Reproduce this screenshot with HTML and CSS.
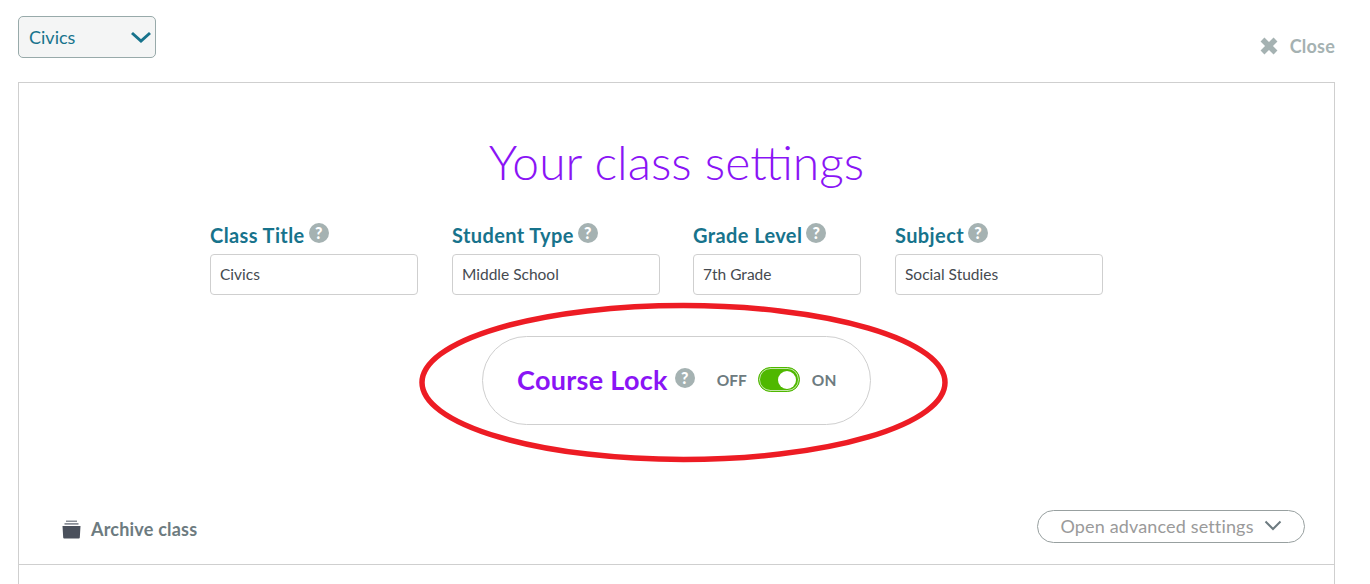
FILE: index.html
```html
<!DOCTYPE html>
<html lang="en">
<head>
    <meta charset="UTF-8">
    <title>Class settings</title>
    <link rel="stylesheet" href="styles.css">
</head>
<body>

    <div class="topbar">
        <div class="class-select">
            <span>Civics</span>
            <svg width="22" height="12" viewBox="0 0 22 12"><path d="M2 2l9 8 9-8" fill="none" stroke="#17738c" stroke-width="3"/></svg>
        </div>
        <a href="#" class="close">
            <svg width="18" height="18" viewBox="0 0 18 18"><path d="M2.500 2.500l13 13M15.500 2.500l-13 13" fill="none" stroke="#a5b2b2" stroke-width="5.500"/></svg>
            Close
        </a>
    </div>

    <div class="panel">
        <h1 class="title">Your class settings</h1>

        <div class="fields">
            <div class="field">
                <label>Class Title <span class="help">?</span></label>
                <div class="input">Civics</div>
            </div>
            <div class="field">
                <label>Student Type <span class="help">?</span></label>
                <div class="input">Middle School</div>
            </div>
            <div class="field field-small">
                <label>Grade Level <span class="help">?</span></label>
                <div class="input">7th Grade</div>
            </div>
            <div class="field">
                <label>Subject <span class="help">?</span></label>
                <div class="input">Social Studies</div>
            </div>
        </div>

        <div class="lock">
            <span class="lock-name">Course Lock</span>
            <span class="help">?</span>
            <span class="lock-off">OFF</span>
            <span class="toggle"><span class="knob"></span></span>
            <span class="lock-on">ON</span>
        </div>

        <div class="panel-bottom">
            <a href="#" class="archive">
                <svg width="19" height="19" viewBox="0 0 19 19">
                    <path d="M4 0.500h11v1.500H4zM2.500 3h14v1.800h-14z" fill="#8a8f98"/>
                    <path d="M0.500 6h18l-0.700 11.500a1 1 0 0 1-1 1H2.200a1 1 0 0 1-1-1z" fill="#4a505c"/>
                </svg>
                Archive class
            </a>
            <a href="#" class="advanced">
                Open advanced settings
                <svg width="18" height="11" viewBox="0 0 18 11"><path d="M1.500 1.500L9 9l7.500-7.500" fill="none" stroke="#6d7b80" stroke-width="2"/></svg>
            </a>
        </div>
        <div class="panel-rest"></div>
    </div>

    <!-- red marker circled on the screenshot -->
    <svg class="marker" width="536" height="166" viewBox="0 0 536 166">
        <ellipse cx="264.500" cy="80.500" rx="261.500" ry="77" fill="none" stroke="#ed1c24" stroke-width="5.500"/>
    </svg>

</body>
</html>
```

FILE: styles.css
```css
* {
    margin: 0;
    padding: 0;
    box-sizing: border-box;
    font-family: Lato, "Open Sans", sans-serif;
}

body {
    background-color: white;
    padding: 16px 35px 0 18px;
    height: 584px;
    overflow: hidden;
}

.topbar {
    display: flex;
    justify-content: space-between;
    height: 66px;
}

.class-select {
    width: 138px;
    height: 42px;
    display: flex;
    justify-content: space-between;
    align-items: center;
    padding: 0 3px 1px 10px;
    background-color: #f4f5f5;
    border: 1px solid #98aaaa;
    border-radius: 5px;
    color: #17738c;
    font-size: 18px;
}

.close {
    display: flex;
    align-items: center;
    gap: 12px;
    height: 28px;
    margin-top: 16px;
    color: #a5b2b2;
    font-size: 18px;
    font-weight: bold;
    letter-spacing: 0.2px;
    text-decoration: none;
}

.panel {
    height: 520px;
    border: 1px solid #cfcfcf;
    border-bottom: none;
}

.title {
    margin-top: 49px;
    height: 60px;
    line-height: 60px;
    text-align: center;
    font-size: 48px;
    font-weight: 300;
    color: #8a14f5;
}

.fields {
    display: flex;
    gap: 34px;
    margin-top: 28px;
    padding-left: 191px;
}

.field {
    width: 208px;
}

.field-small {
    width: 168px;
    margin-left: -1px;
}

.field label {
    display: flex;
    align-items: center;
    gap: 4px;
    height: 30px;
    margin-bottom: 4px;
    color: #17738c;
    font-size: 20px;
    font-weight: bold;
    letter-spacing: 0.4px;
}

.input {
    height: 41px;
    line-height: 39px;
    padding-left: 9px;
    border: 1px solid #cfcfcf;
    border-radius: 4px;
    color: #454a50;
    font-size: 15.500px;
}

.help {
    display: inline-block;
    width: 20px;
    height: 20px;
    line-height: 20px;
    margin-top: -5px;
    border-radius: 50%;
    background-color: #a5b2b2;
    color: white;
    font-size: 16px;
    font-weight: 900;
    letter-spacing: 0;
    text-align: center;
}

.lock {
    display: flex;
    align-items: center;
    width: 389px;
    height: 89px;
    margin: 41px auto 0;
    padding: 0 0 2px 34px;
    border: 1px solid #cfcfcf;
    border-radius: 45px;
}

.lock .help {
    margin: -3px 0 0 7px;
}

.lock-name {
    color: #8a14f5;
    font-size: 27px;
    font-weight: bold;
    letter-spacing: 0.3px;
}

.lock-off, .lock-on {
    color: #6d7b80;
    font-size: 15.500px;
    font-weight: bold;
}

.lock-off {
    margin-left: 22px;
}

.lock-on {
    margin-left: 12px;
}

.toggle {
    display: flex;
    justify-content: flex-end;
    align-items: center;
    width: 42px;
    height: 25px;
    margin-left: 11px;
    padding-right: 3px;
    background-color: #4fb800;
    border: 1px solid #4fb800;
    border-radius: 13px;
    box-shadow: inset 0 0 0 1px #c4e6a8;
}

.knob {
    width: 18px;
    height: 18px;
    border-radius: 50%;
    background-color: white;
}

.panel-bottom {
    display: flex;
    justify-content: space-between;
    align-items: center;
    height: 33px;
    margin-top: 85px;
    padding: 0 29px 0 43px;
}

.archive {
    display: flex;
    align-items: center;
    gap: 10px;
    margin-top: 5px;
    color: #6d7b80;
    font-size: 18px;
    font-weight: bold;
    letter-spacing: 0.2px;
    text-decoration: none;
}

.advanced {
    display: flex;
    justify-content: center;
    align-items: center;
    gap: 10px;
    width: 268px;
    height: 33px;
    padding-bottom: 2px;
    border: 1px solid #98a0a0;
    border-radius: 17px;
    color: #9a9a9a;
    font-size: 18px;
    letter-spacing: 0.150px;
    text-decoration: none;
}

.panel-rest {
    margin-top: 21px;
    border-top: 1px solid #cfcfcf;
}

.marker {
    position: absolute;
    left: 419px;
    top: 302px;
}
```
